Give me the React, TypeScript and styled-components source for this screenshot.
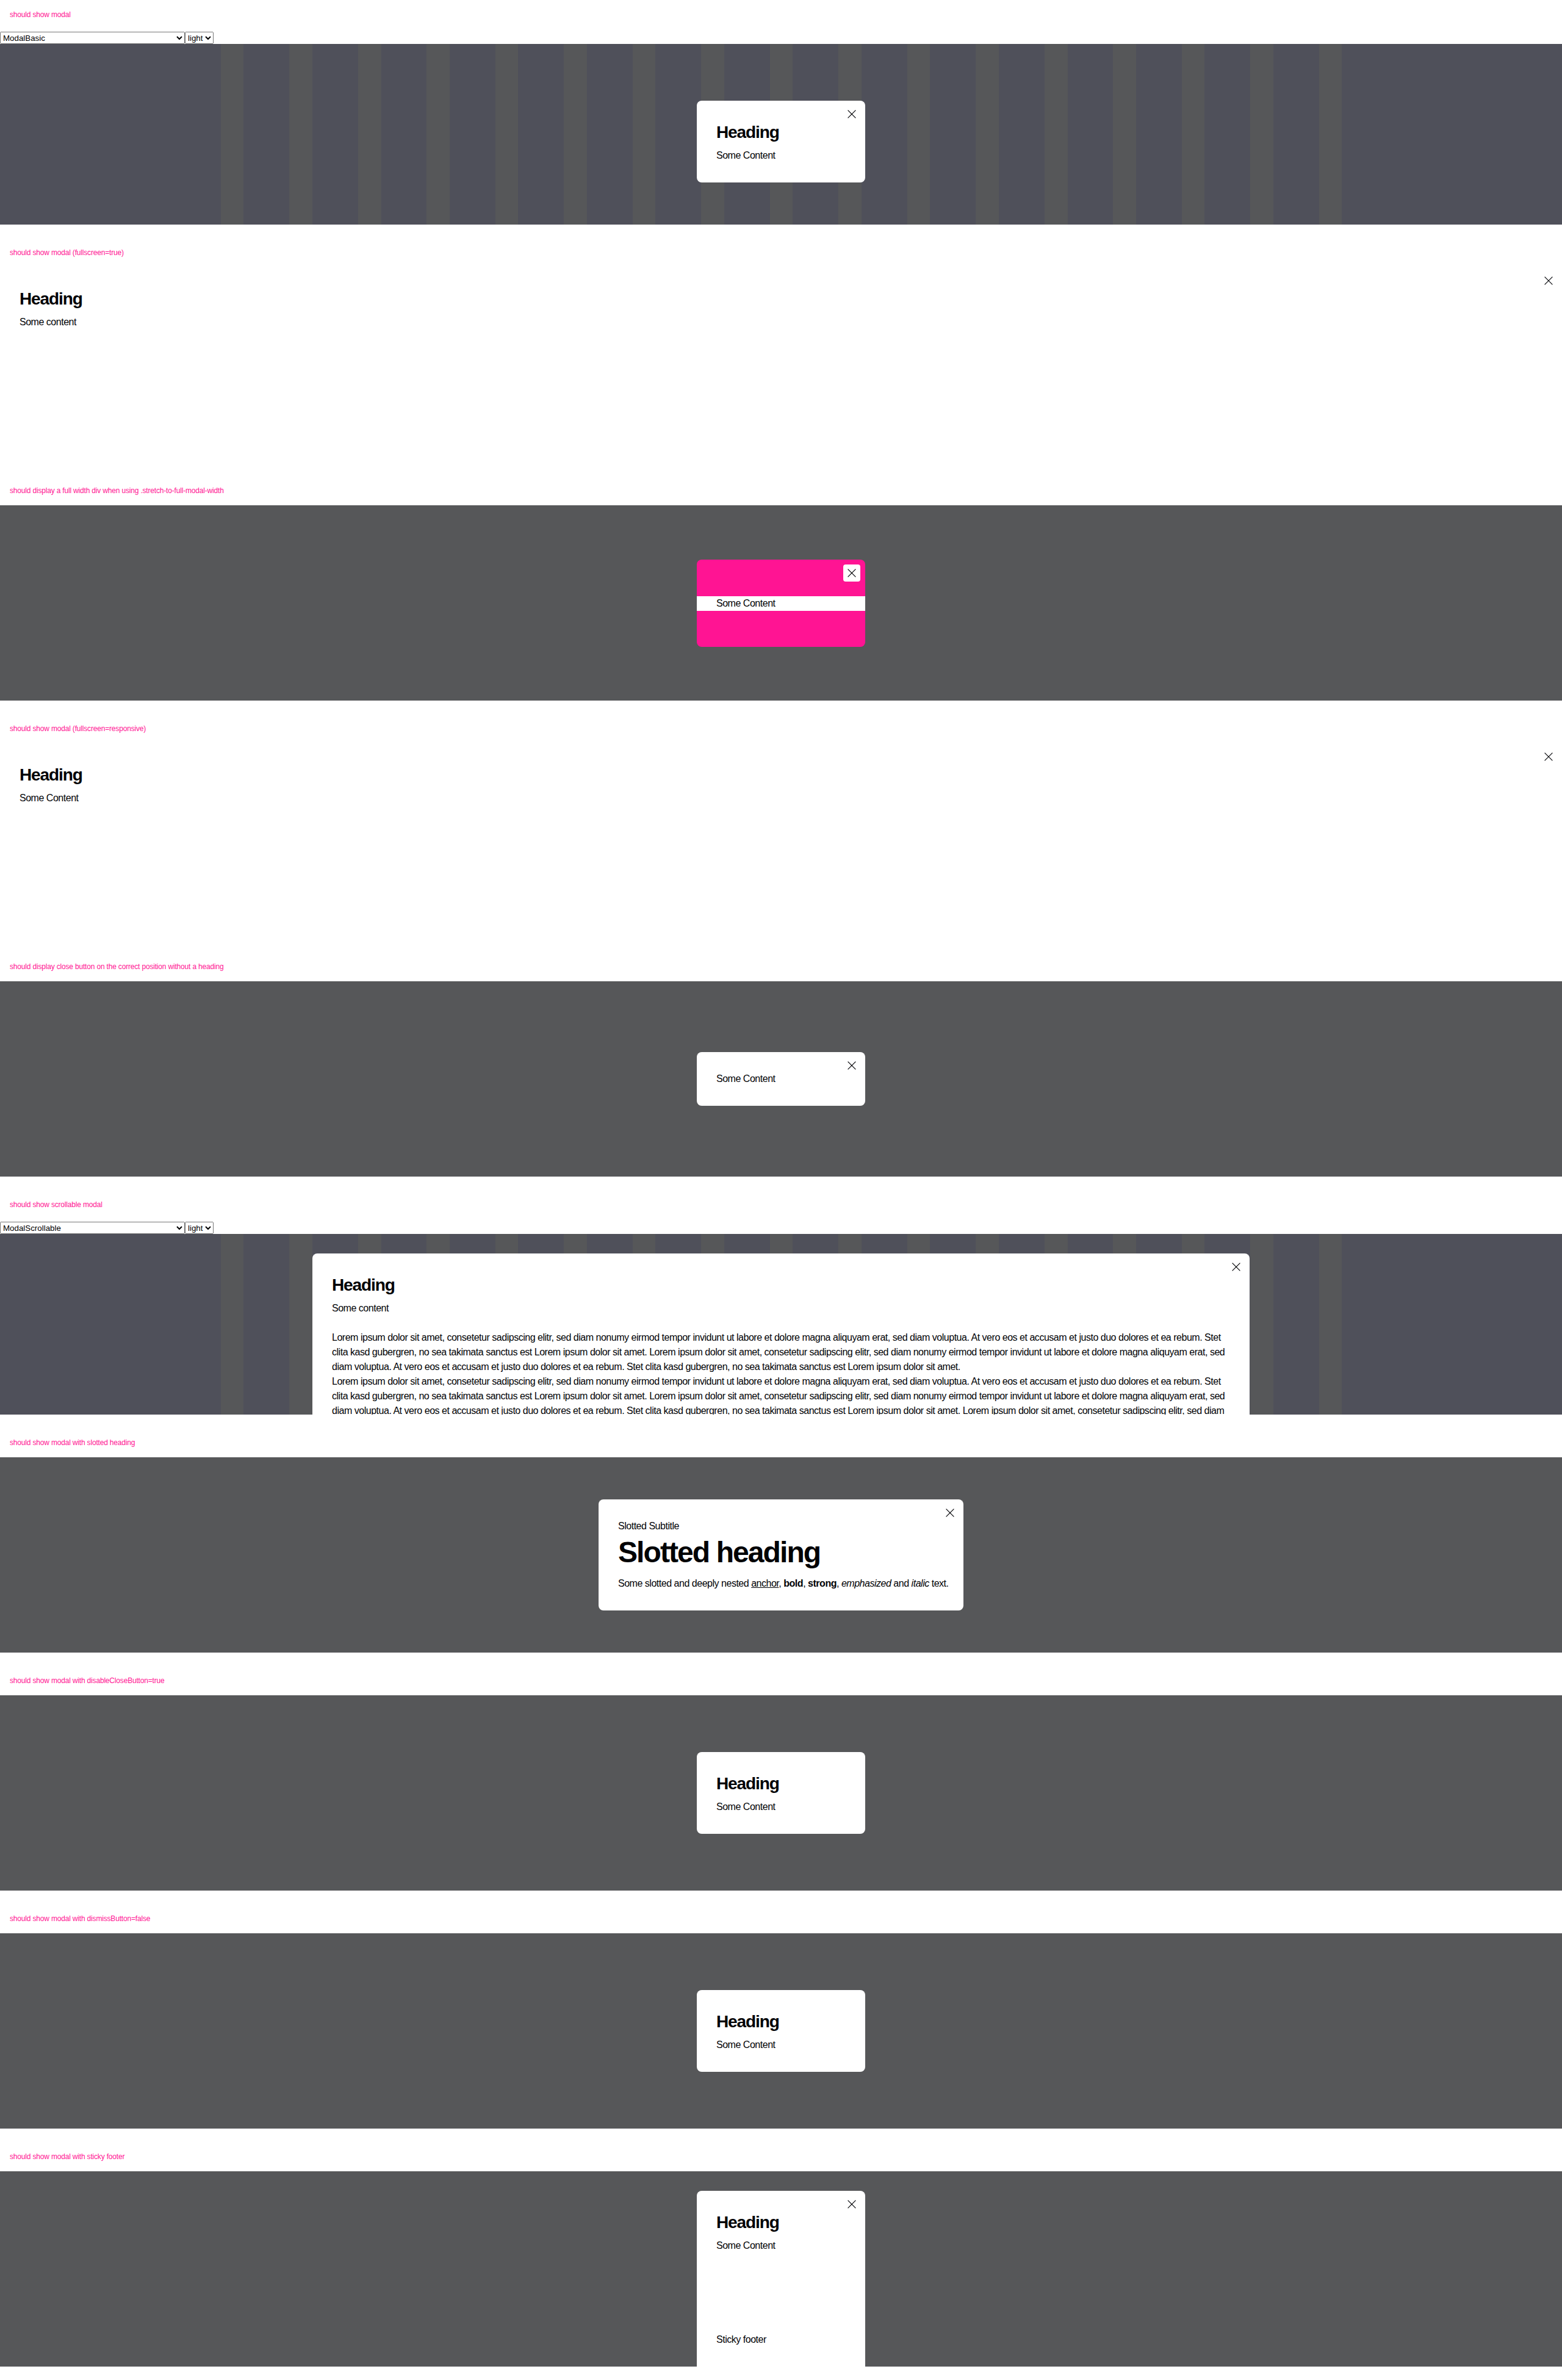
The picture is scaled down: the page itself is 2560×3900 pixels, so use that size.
import React from 'react'
import styled, { createGlobalStyle, css } from 'styled-components'

const ink = '#010205'

const GlobalStyle = createGlobalStyle`
  html, body {
    margin: 0;
    padding: 0;
    background: #fff;
  }
  body {
    font-family: 'Liberation Sans', Arial, sans-serif;
    color: ${ink};
  }
`

const LOREM =
  'Lorem ipsum dolor sit amet, consetetur sadipscing elitr, sed diam nonumy eirmod tempor invidunt ut labore et dolore magna aliquyam erat, sed diam voluptua. At vero eos et accusam et justo duo dolores et ea rebum. Stet clita kasd gubergren, no sea takimata sanctus est Lorem ipsum dolor sit amet.'

const Page = styled.div`
  padding-bottom: 22px;
`

const Section = styled.section`
  padding-top: 38px;

  &:first-child {
    padding-top: 16px;
  }
`

const Title = styled.div`
  margin-bottom: 16px;
  padding: 0 16px;
  color: deeppink;
  font-size: 12px;
  line-height: 16px;
  letter-spacing: -0.015em;
`

const Frame = styled.div`
  display: flex;
  flex-direction: column;
  height: 320px;
  overflow: hidden;
  position: relative;
`

const SelectBar = styled.div`
  display: flex;
  height: 24px;
  padding-top: 4px;
  box-sizing: border-box;
  background: #fff;
`

const Select = styled.select<{ $width?: number }>`
  height: 20px;
  margin: 0;
  width: ${p => (p.$width ? `${p.$width}px` : 'auto')};
  font-family: 'Liberation Sans', Arial, sans-serif;
  font-size: 13.33px;
  color: #000;
`

const striped = css`
  background-color: #4f505a;
  background-image: repeating-linear-gradient(
    to right,
    #565759 0 37.5px,
    transparent 37.5px 112.5px
  );
  background-size: 1837.5px 100%;
  background-position: 362px 0;
  background-repeat: no-repeat;
`

const Backdrop = styled.div<{ $striped?: boolean; $top?: boolean; $offset?: number }>`
  flex: 1;
  min-height: 0;
  display: flex;
  justify-content: center;
  align-items: ${p => (p.$top ? 'flex-start' : 'center')};
  padding-top: ${p => p.$offset ?? 0}px;
  box-sizing: border-box;
  overflow: hidden;
  ${p => (p.$striped ? striped : 'background-color: #565759;')}
`

const Modal = styled.div<{ $width?: number; $pink?: boolean }>`
  position: relative;
  display: flex;
  flex-direction: column;
  flex-shrink: 0;
  box-sizing: border-box;
  width: ${p => p.$width ?? 276}px;
  padding: 32px;
  border-radius: 8px;
  background: ${p => (p.$pink ? '#ff1493' : '#fff')};
`

const StretchModal = styled(Modal)`
  padding: 60px 0 59px;
`

const TallModal = styled(Modal)<{ $height: number }>`
  height: ${p => p.$height}px;
  padding-bottom: 52px;
`

const FullscreenModal = styled.div`
  position: relative;
  flex: 1;
  padding: 32px;
  background: #fff;
`

const CloseButton = styled.button`
  position: absolute;
  top: 8px;
  right: 8px;
  width: 28px;
  height: 28px;
  display: grid;
  place-items: center;
  padding: 0;
  border: 0;
  border-radius: 4px;
  background: #fff;
  color: ${ink};
`

const Heading = styled.h2`
  margin: 0;
  font-size: 28px;
  line-height: 40px;
  font-weight: 700;
  letter-spacing: -0.04em;
  white-space: nowrap;
`

const Text = styled.p<{ $gap?: number }>`
  margin: ${p => p.$gap ?? 0}px 0 0;
  font-size: 16px;
  line-height: 24px;
  letter-spacing: -0.03em;
`

const Band = styled(Text)`
  padding: 0 32px;
  background: #fff;
`

const Subtitle = styled.p`
  margin: 0;
  font-size: 16px;
  line-height: 24px;
  letter-spacing: -0.03em;
`

const SlottedHeading = styled.h2`
  margin: 1px 0 0;
  font-size: 48px;
  line-height: 60px;
  font-weight: 700;
  letter-spacing: -0.04em;
  white-space: nowrap;
`

const SlottedText = styled(Text)`
  white-space: nowrap;

  a {
    color: inherit;
  }
`

const Footer = styled(Text)`
  margin-top: auto;
`

function CloseIcon() {
  return (
    <svg width="14" height="14" viewBox="0 0 14 14" fill="none">
      <path d="M0.6 0.6L13.4 13.4M13.4 0.6L0.6 13.4" stroke="currentColor" strokeWidth="1.2" />
    </svg>
  )
}

function Close() {
  return (
    <CloseButton aria-label="Dismiss modal">
      <CloseIcon />
    </CloseButton>
  )
}

function Selectors({ component }: { component: string }) {
  return (
    <SelectBar>
      <Select $width={303} defaultValue={component}>
        <option>{component}</option>
      </Select>
      <Select defaultValue="light">
        <option>light</option>
      </Select>
    </SelectBar>
  )
}

function Block({ title, children }: { title: string; children: React.ReactNode }) {
  return (
    <Section>
      <Title>{title}</Title>
      <Frame>{children}</Frame>
    </Section>
  )
}

function BasicModal({ dismiss = true }: { dismiss?: boolean }) {
  return (
    <Modal>
      {dismiss && <Close />}
      <Heading>Heading</Heading>
      <Text $gap={6}>Some Content</Text>
    </Modal>
  )
}

export default function App() {
  return (
    <>
      <GlobalStyle />
      <Page>
        <Block title="should show modal">
          <Selectors component="ModalBasic" />
          <Backdrop $striped $offset={24}>
            <BasicModal />
          </Backdrop>
        </Block>

        <Block title="should show modal (fullscreen=true)">
          <FullscreenModal>
            <Close />
            <Heading>Heading</Heading>
            <Text $gap={6}>Some content</Text>
          </FullscreenModal>
        </Block>

        <Block title="should display a full width div when using .stretch-to-full-modal-width">
          <Backdrop>
            <StretchModal $pink>
              <Close />
              <Band>Some Content</Band>
            </StretchModal>
          </Backdrop>
        </Block>

        <Block title="should show modal (fullscreen=responsive)">
          <FullscreenModal>
            <Close />
            <Heading>Heading</Heading>
            <Text $gap={6}>Some Content</Text>
          </FullscreenModal>
        </Block>

        <Block title="should display close button on the correct position without a heading">
          <Backdrop>
            <Modal>
              <Close />
              <Text>Some Content</Text>
            </Modal>
          </Backdrop>
        </Block>

        <Block title="should show scrollable modal">
          <Selectors component="ModalScrollable" />
          <Backdrop $striped $top $offset={32}>
            <Modal $width={1536}>
              <Close />
              <Heading>Heading</Heading>
              <Text $gap={6}>Some content</Text>
              <Text $gap={24}>{`${LOREM} ${LOREM}`}</Text>
              <Text>{`${LOREM} ${LOREM} ${LOREM} ${LOREM}`}</Text>
              <Text>{`${LOREM} ${LOREM} ${LOREM} ${LOREM}`}</Text>
            </Modal>
          </Backdrop>
        </Block>

        <Block title="should show modal with slotted heading">
          <Backdrop>
            <Modal $width={598}>
              <Close />
              <Subtitle>Slotted Subtitle</Subtitle>
              <SlottedHeading>Slotted heading</SlottedHeading>
              <SlottedText $gap={9}>
                Some slotted and deeply nested <a href="#">anchor</a>, <b>bold</b>, <strong>strong</strong>,{' '}
                <em>emphasized</em> and <i>italic</i> text.
              </SlottedText>
            </Modal>
          </Backdrop>
        </Block>

        <Block title="should show modal with disableCloseButton=true">
          <Backdrop>
            <BasicModal dismiss={false} />
          </Backdrop>
        </Block>

        <Block title="should show modal with dismissButton=false">
          <Backdrop>
            <BasicModal dismiss={false} />
          </Backdrop>
        </Block>

        <Block title="should show modal with sticky footer">
          <Backdrop $top $offset={32}>
            <TallModal $height={308}>
              <Close />
              <Heading>Heading</Heading>
              <Text $gap={6}>Some Content</Text>
              <Footer>Sticky footer</Footer>
            </TallModal>
          </Backdrop>
        </Block>
      </Page>
    </>
  )
}
